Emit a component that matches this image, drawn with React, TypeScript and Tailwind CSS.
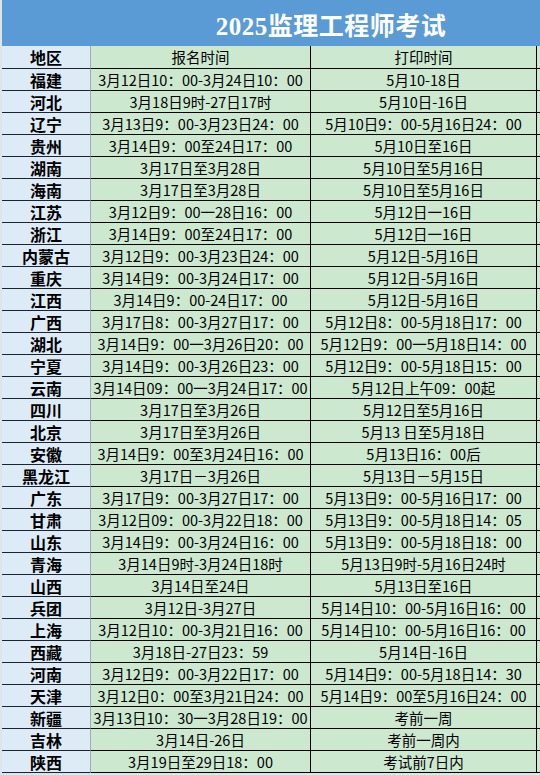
const rows: [string, string, string][] = [
  ['福建', '3月12日10：00-3月24日10：00', '5月10-18日'],
  ['河北', '3月18日9时-27日17时', '5月10日-16日'],
  ['辽宁', '3月13日9：00-3月23日24：00', '5月10日9：00-5月16日24：00'],
  ['贵州', '3月14日9：00至24日17：00', '5月10日至16日'],
  ['湖南', '3月17日至3月28日', '5月10日至5月16日'],
  ['海南', '3月17日至3月28日', '5月10日至5月16日'],
  ['江苏', '3月12日9：00一28日16：00', '5月12日一16日'],
  ['浙江', '3月14日9：00至24日17：00', '5月12日一16日'],
  ['内蒙古', '3月12日9：00-3月23日24：00', '5月12日-5月16日'],
  ['重庆', '3月14日9：00-3月24日17：00', '5月12日-5月16日'],
  ['江西', '3月14日9：00-24日17：00', '5月12日-5月16日'],
  ['广西', '3月17日8：00-3月27日17：00', '5月12日8：00-5月18日17：00'],
  ['湖北', '3月14日9：00一3月26日20：00', '5月12日9：00一5月18日14：00'],
  ['宁夏', '3月14日9：00-3月26日23：00', '5月12日9：00-5月18日15：00'],
  ['云南', '3月14日09：00一3月24日17：00', '5月12日上午09：00起'],
  ['四川', '3月17日至3月26日', '5月12日至5月16日'],
  ['北京', '3月17日至3月26日', '5月13 日至5月18日'],
  ['安徽', '3月14日9：00至3月24日16：00', '5月13日16：00后'],
  ['黑龙江', '3月17日－3月26日', '5月13日－5月15日'],
  ['广东', '3月17日9：00-3月27日17：00', '5月13日9：00-5月16日17：00'],
  ['甘肃', '3月12日09：00-3月22日18：00', '5月13日9：00-5月18日14：05'],
  ['山东', '3月14日9：00-3月24日16：00', '5月13日9：00-5月18日18：00'],
  ['青海', '3月14日9时-3月24日18时', '5月13日9时-5月16日24时'],
  ['山西', '3月14日至24日', '5月13日至16日'],
  ['兵团', '3月12日-3月27日', '5月14日10：00-5月16日16：00'],
  ['上海', '3月12日10：00-3月21日16：00', '5月14日10：00-5月16日16：00'],
  ['西藏', '3月18日-27日23：59', '5月14日-16日'],
  ['河南', '3月12日9：00-3月22日17：00', '5月14日9：00-5月18日14：30'],
  ['天津', '3月12日0：00至3月21日24：00', '5月14日9：00至5月16日24：00'],
  ['新疆', '3月13日10：30一3月28日19：00', '考前一周'],
  ['吉林', '3月14日-26日', '考前一周内'],
  ['陕西', '3月19日至29日18：00', '考试前7日内'],
];

function Row({ region, signup, print, header = false }: { region: string; signup: string; print: string; header?: boolean }) {
  const h = header ? 'h-[23px]' : 'h-[22px]';
  return (
    <>
      <div className={`${h} flex items-center justify-center border-b border-r border-b-[#1c2430] border-r-[#a3aab3] bg-[#ddebf7] font-bold text-[16px] text-black whitespace-nowrap`}>
        {region}
      </div>
      <div className={`${h} flex items-center justify-center overflow-hidden border-b border-r border-black bg-[#cce8cf] text-[14.5px] text-black whitespace-nowrap`}>
        {signup}
      </div>
      <div className={`${h} flex items-center justify-center overflow-hidden border-b border-r border-black bg-[#cce8cf] text-[14.5px] text-black whitespace-nowrap`}>
        {print}
      </div>
      <div className={`${h} border-b border-black bg-[#cce8cf]`} />
    </>
  );
}

export default function App() {
  return (
    <div
      className="w-[540px] h-[775px] overflow-hidden bg-[#dfe3ea] pl-[2px]"
      style={{ fontFamily: '"Noto Sans CJK SC", "Noto Sans", sans-serif' }}
    >
      {/* title bar */}
      <div className="h-[46px] bg-[#5b9bd5] flex items-center justify-center pl-[120px] pt-[6px]">
        <h1
          className="text-white text-[25px] font-semibold leading-none tracking-[0.5px]"
          style={{ fontFamily: '"Liberation Serif", "Noto Sans CJK SC", serif' }}
        >
          2025监理工程师考试
        </h1>
      </div>

      {/* table */}
      <div className="grid grid-cols-[89px_220px_226px_3px]">
        <Row region="地区" signup="报名时间" print="打印时间" header />
        {rows.map(([r, s, p]) => (
          <Row key={r} region={r} signup={s} print={p} />
        ))}
      </div>
    </div>
  );
}
